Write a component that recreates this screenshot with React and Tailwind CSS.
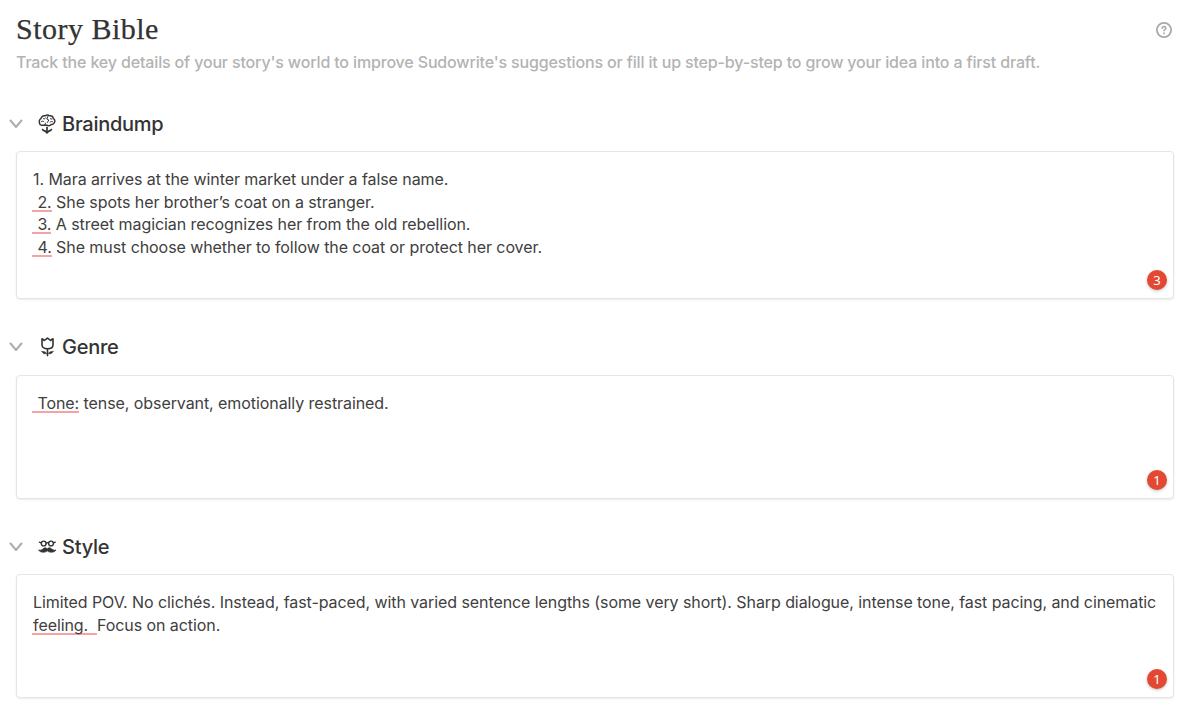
import React from "react";

function Chevron() {
  return (
    <svg className="h-[10px] w-[14px] shrink-0" viewBox="0 0 14 10" fill="none" stroke="#adadad" strokeWidth="2" strokeLinecap="round" strokeLinejoin="round">
      <path d="M1.500 1.500 7 8l5.500-6.500" />
    </svg>
  );
}

function BrainIcon() {
  return (
    <svg className="h-5 w-[18px]" viewBox="0 0 18 20" fill="none" stroke="#333" strokeWidth="1.400" strokeLinecap="round" strokeLinejoin="round">
      <path d="M6.200 11.300H4.200C2.500 11.300 1.200 10.200 1.500 8.600 .9 7 1.600 5.200 3 4.700 3.500 2.500 5.300 1.500 7.200 1.800 8.500 1 10.500 1 11.600 1.800 13.700 1.600 15 2.800 15.400 4.500 16.800 5.500 17 7.500 16.300 8.800 15.700 10.200 14.500 10.700 13.200 10.400 12.300 11.600 10.500 11.900 9.500 11.200Z" />
      <path d="M3.200 7.700c1-.7 1.900-.7 2.700-.2M5.400 4.700c1 .5 1.600.2 2.200-.8M10 2.400 8.800 5l2 1-1.400 2.500M12.400 4.700l1.500.4M12 8.200c.8-.8 1.900-.9 2.700-.4M6.900 10.900l.6-1.700" strokeWidth="1" />
      <path d="M9 13.400v4.600" strokeWidth="1.700" />
      <path d="M4.700 15.600c.7 1.400 2 1.200 2.900 1.800.6.400 1 .8 1.400 1.500.4-.7.800-1.100 1.400-1.500.9-.6 2.200-.4 2.900-1.800" strokeWidth="1.800" />
    </svg>
  );
}

function TulipIcon() {
  return (
    <svg className="h-5 w-[18px]" viewBox="0 0 18 20" fill="none" stroke="#333" strokeWidth="1.600" strokeLinecap="round" strokeLinejoin="round">
      <path d="M4 1.800c1 .2 1.700.8 2.200 1.700C7 2.900 8.200 2.400 9.500 1.200c1.300 1.200 2.500 1.700 3.300 2.300.5-.9 1.200-1.500 2.200-1.700V7.700c0 2.600-2 4.100-5.500 4.100S4 10.300 4 7.700Z" />
      <path d="M9.500 12v6.600" />
      <path d="M3.900 14.400c2.300-.1 4.100.5 4.900 2.200-2.300.7-4.200-.2-4.900-2.200ZM15.100 14.400c-2.300-.1-4.100.5-4.900 2.200 2.300.7 4.200-.2 4.900-2.200Z" fill="#333" strokeWidth=".5" />
    </svg>
  );
}

function DisguiseIcon() {
  return (
    <svg className="h-5 w-[18px] overflow-visible" viewBox="0 0 18 20" fill="none" stroke="#333" strokeWidth="1.400" strokeLinecap="round" strokeLinejoin="round">
      <circle cx="5.700" cy="6.500" r="2.400" />
      <circle cx="13" cy="6.500" r="2.400" />
      <path d="M8.200 6.100c.6-.5 1.700-.5 2.300 0M3.200 5.800 1.400 5.200M15.500 5.800l1.800-.6" />
      <path d="M9.300 11.900C8.500 10.600 6.700 10.500 5.600 11.300 4.500 12.600 3.200 13.500.6 13c1.500 2.700 6.600 3 8.700.8 2.100 2.200 7.200 1.900 8.700-.8-2.600.5-3.900-.4-5-1.700-1.100-.8-2.900-.7-3.700.6Z" fill="#333" strokeWidth=".7" />
    </svg>
  );
}

function HelpIcon() {
  return (
    <svg className="mt-1 h-4 w-4 shrink-0" viewBox="0 0 16 16" fill="none" stroke="#a8a8a8" strokeWidth="1.800" strokeLinecap="round" strokeLinejoin="round">
      <circle cx="8" cy="8" r="7.100" />
      <path d="M6.200 6.300C6.200 5.100 7 4.500 8 4.500s1.800.7 1.800 1.700c0 1.200-1.800 1.300-1.800 2.500" strokeWidth="1.500" />
      <path d="M8 11.200v.2" strokeWidth="1.700" />
    </svg>
  );
}

function Flag({ children }) {
  return <span className="-ml-px inline-block h-[21px] border-b-2 border-[#f5a3a6] pl-px align-top leading-[22.6px] whitespace-pre">{children}</span>;
}

function Section({ icon, title, count, gap, height, children }) {
  return (
    <section className={gap}>
      <div className="flex h-7 items-center">
        <div className="mr-[15px] -ml-[7px] flex"><Chevron /></div>
        {icon}
        <h2 className="ml-[6px] text-[20px] leading-7 font-medium tracking-[-0.25px] text-[#333]">{title}</h2>
      </div>
      <div className={`relative rounded-[4px] border border-[#e5e5e5] bg-white px-4 pt-4 shadow-[0_1px_2px_rgba(0,0,0,0.08)] ${height}`}>
        <div className="text-[16px] leading-[22.6px] tracking-[-0.075px] text-[#404040]">{children}</div>
        <span className="absolute right-[6px] bottom-[8px] flex h-5 w-5 items-center justify-center rounded-full bg-[#e34832] font-['Noto_Sans',sans-serif] text-[13px] leading-none text-white shadow-[0_1px_3px_rgba(0,0,0,0.25)]">{count}</span>
      </div>
    </section>
  );
}

export default function App() {
  return (
    <main className="h-[721px] overflow-hidden bg-white pt-[10px] pr-[13px] pl-4 font-['Inter',sans-serif]">
      <header>
        <div className="flex h-9 items-center justify-between pr-[2px]">
          <h1 className="pt-[2px] font-['Liberation_Serif',serif] text-[30px] leading-9 tracking-[0.48px] text-[#333] [-webkit-text-stroke:0.25px_#333]">Story Bible</h1>
          <HelpIcon />
        </div>
        <p className="mt-1 text-[16px] leading-6 font-medium tracking-[-0.152px] text-[#b3b3b3]">Track the key details of your story's world to improve Sudowrite's suggestions or fill it up step-by-step to grow your idea into a first draft.</p>
      </header>
      <Section icon={<BrainIcon />} title="Braindump" count="3" gap="mt-9" height="mt-[13px] h-[148px]">
        <div>1. Mara arrives at the winter market under a false name.</div>
        <div><Flag> 2.</Flag> She spots her brother’s coat on a stranger.</div>
        <div><Flag> 3.</Flag> A street magician recognizes her from the old rebellion.</div>
        <div><Flag> 4.</Flag> She must choose whether to follow the coat or protect her cover.</div>
      </Section>
      <Section icon={<TulipIcon />} title="Genre" count="1" gap="mt-[34px]" height="mt-[14px] h-[124px]">
        <div><Flag> Tone:</Flag> tense, observant, emotionally restrained.</div>
      </Section>
      <Section icon={<DisguiseIcon />} title="Style" count="1" gap="mt-[34px]" height="mt-[13px] h-[124px]">
        <div className="whitespace-nowrap">Limited POV. No clichés. Instead, fast-paced, with varied sentence lengths (some very short). Sharp dialogue, intense tone, fast pacing, and cinematic</div>
        <div><Flag>{"feeling.  "}</Flag>Focus on action.</div>
      </Section>
    </main>
  );
}
